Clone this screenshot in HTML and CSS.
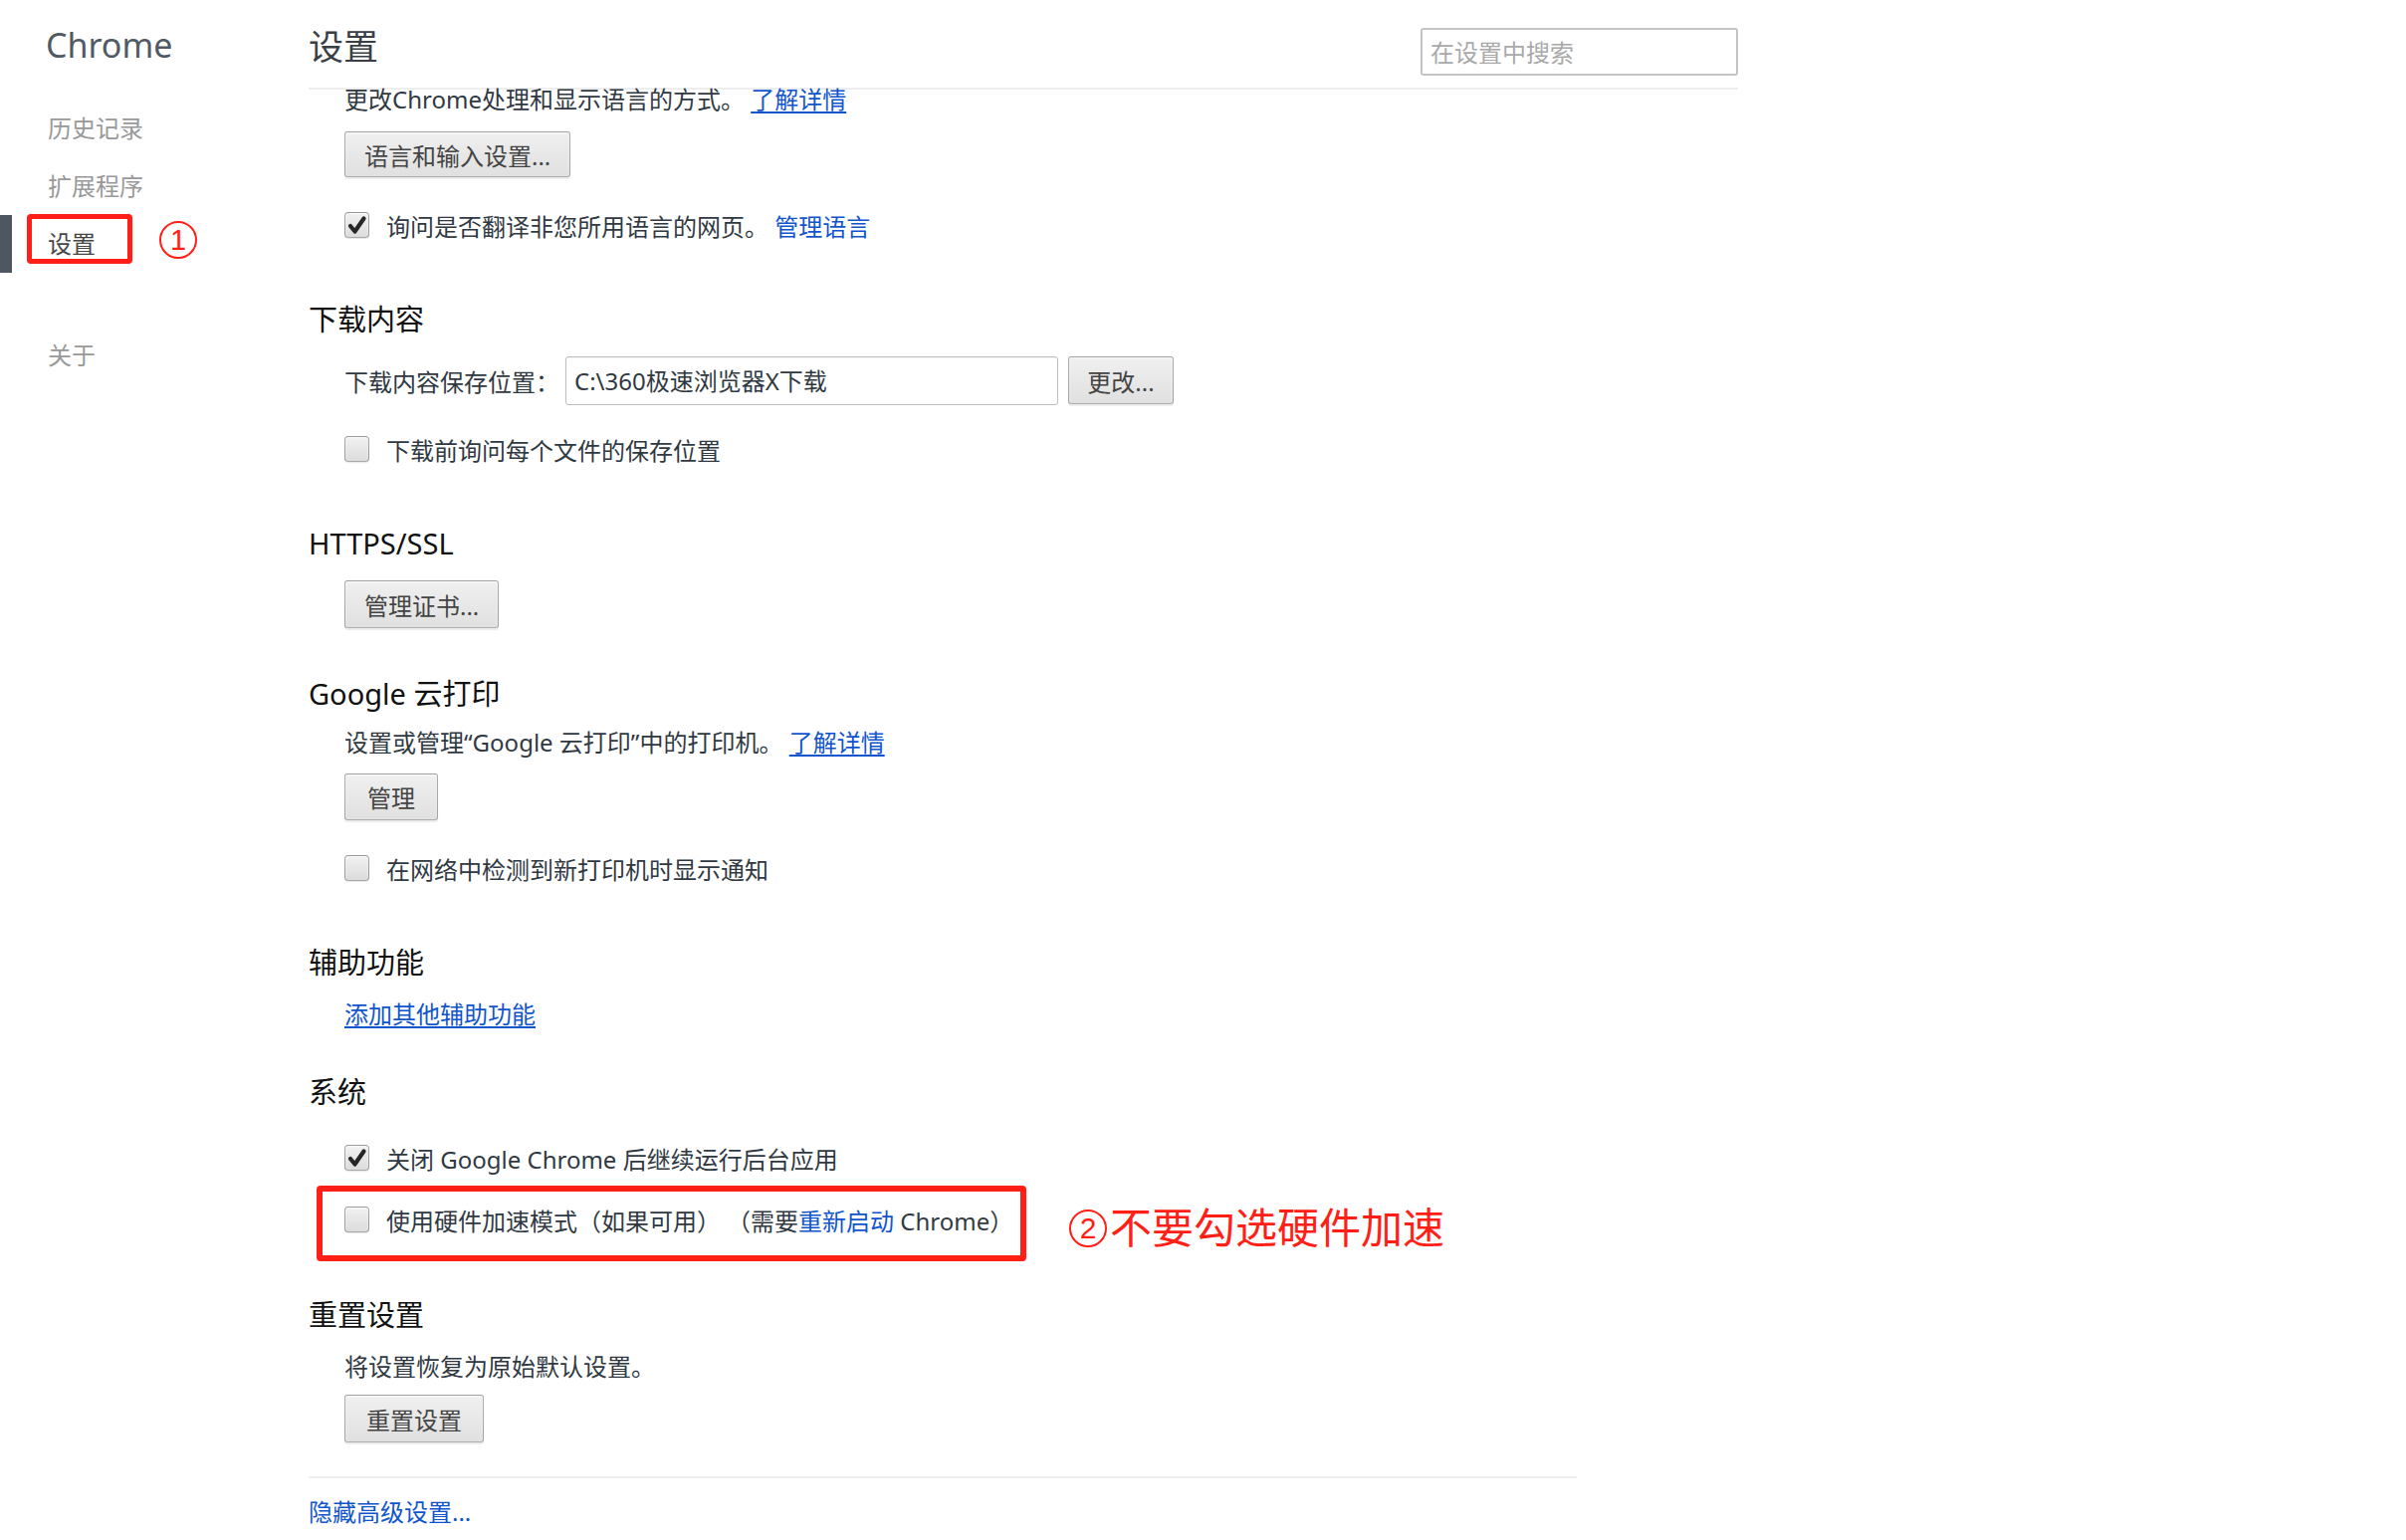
FILE: index.html
```html
<!DOCTYPE html>
<html lang="zh-CN">
<head>
    <meta charset="UTF-8">
    <title>设置</title>
    <link rel="stylesheet" href="styles.css">
</head>
<body>
    <div class="page">
        <!-- Sidebar -->
        <div class="sidebar">
            <div class="brand">Chrome</div>
            <nav class="nav">
                <a href="#" class="nav-item">历史记录</a>
                <a href="#" class="nav-item">扩展程序</a>
                <a href="#" class="nav-item active">设置</a>
                <a href="#" class="nav-item nav-about">关于</a>
            </nav>
            <div class="mark-box mark-nav"></div>
            <span class="mark-num mark-num-nav">1</span>
        </div>

        <!-- Main -->
        <div class="main">
            <div class="main-header">
                <h1 class="page-title">设置</h1>
                <input class="search" type="text" placeholder="在设置中搜索">
            </div>

            <div class="section section-lang">
                <div class="section-body">
                    <div class="desc desc-first">更改Chrome处理和显示语言的方式。 <a href="#" class="link-u">了解详情</a></div>
                    <div class="btn-row btn-after-desc"><button class="btn">语言和输入设置...</button></div>
                    <div class="check-row">
                        <span class="checkbox checked">
                            <svg viewBox="0 0 23 23" width="23" height="23"><path d="M5 12 L9.5 17.5 L18.5 4.5" fill="none" stroke="#262626" stroke-width="4.2" stroke-linecap="round" stroke-linejoin="round"/></svg>
                        </span>
                        <span>询问是否翻译非您所用语言的网页。 <a href="#" class="link">管理语言</a></span>
                    </div>
                </div>
            </div>

            <div class="section">
                <h3 class="section-title">下载内容</h3>
                <div class="section-body">
                    <div class="field-row">
                        <span class="field-label">下载内容保存位置：</span>
                        <div class="field">C:\360极速浏览器X下载</div>
                        <button class="btn btn-change">更改...</button>
                    </div>
                    <div class="check-row check-after-field">
                        <span class="checkbox"></span>
                        <span>下载前询问每个文件的保存位置</span>
                    </div>
                </div>
            </div>

            <div class="section">
                <h3 class="section-title">HTTPS/SSL</h3>
                <div class="section-body">
                    <div class="btn-row btn-tall"><button class="btn">管理证书...</button></div>
                </div>
            </div>

            <div class="section section-after-btn">
                <h3 class="section-title">Google 云打印</h3>
                <div class="section-body">
                    <div class="desc desc-lead">设置或管理“Google 云打印”中的打印机。 <a href="#" class="link-u">了解详情</a></div>
                    <div class="btn-row btn-after-desc-2"><button class="btn btn-wide">管理</button></div>
                    <div class="check-row check-loose">
                        <span class="checkbox"></span>
                        <span>在网络中检测到新打印机时显示通知</span>
                    </div>
                </div>
            </div>

            <div class="section">
                <h3 class="section-title">辅助功能</h3>
                <div class="section-body">
                    <div class="desc"><a href="#" class="link-u">添加其他辅助功能</a></div>
                </div>
            </div>

            <div class="section section-after-link">
                <h3 class="section-title">系统</h3>
                <div class="section-body">
                    <div class="check-row check-first">
                        <span class="checkbox checked">
                            <svg viewBox="0 0 23 23" width="23" height="23"><path d="M5 12 L9.5 17.5 L18.5 4.5" fill="none" stroke="#262626" stroke-width="4.2" stroke-linecap="round" stroke-linejoin="round"/></svg>
                        </span>
                        <span>关闭 Google Chrome 后继续运行后台应用</span>
                    </div>
                    <div class="check-row marked">
                        <span class="checkbox"></span>
                        <span>使用硬件加速模式（如果可用）</span>
                        <span class="restart">（需要<a href="#" class="link">重新启动</a> Chrome）</span>
                        <div class="mark-box mark-gpu"></div>
                        <div class="mark-note"><span class="mark-num mark-num-note">2</span>不要勾选硬件加速</div>
                    </div>
                </div>
            </div>

            <div class="section section-reset">
                <h3 class="section-title">重置设置</h3>
                <div class="section-body">
                    <div class="desc desc-reset">将设置恢复为原始默认设置。</div>
                    <div class="btn-row btn-after-desc-3 btn-tall"><button class="btn btn-mid">重置设置</button></div>
                </div>
            </div>

            <div class="footer-line"></div>
            <div class="desc footer-link"><a href="#" class="link">隐藏高级设置...</a></div>
        </div>
    </div>
</body>
</html>
```

FILE: styles.css
```css
* {
    margin: 0;
    padding: 0;
    box-sizing: border-box;
}

body {
    font-family: "Noto Sans", "Noto Sans CJK SC", sans-serif;
    font-size: 24px;
    color: #303942;
    background-color: #ffffff;
    width: 2417px;
    height: 1547px;
    overflow: hidden;
}

a {
    text-decoration: none;
}

.page {
    display: flex;
    height: 100%;
}

/* Sidebar */

.sidebar {
    width: 310px;
    flex: none;
    position: relative;
    padding-top: 25px;
}

.brand {
    padding-left: 46px;
    font-size: 34px;
    line-height: 40px;
    color: #505a64;
}

.nav {
    margin-top: 35px;
    display: flex;
    flex-direction: column;
}

.nav-item {
    position: relative;
    display: block;
    height: 58px;
    line-height: 58px;
    padding-left: 48px;
    color: #999999;
}

.nav-item.active {
    color: #464646;
}

.nav-item.active::before {
    content: "";
    position: absolute;
    left: 0;
    top: 0;
    width: 12px;
    height: 58px;
    background-color: #4d5661;
}

.nav-about {
    margin-top: 54px;
}

/* Red annotations */

.mark-box {
    position: absolute;
    border: 5px solid #ff1f17;
    border-radius: 4px;
}

.mark-nav {
    left: 27px;
    top: 215px;
    width: 106px;
    height: 50px;
}

.mark-num {
    display: inline-flex;
    align-items: center;
    justify-content: center;
    border: 2.5px solid #ff1f17;
    border-radius: 50%;
    color: #ff1f17;
    font-family: "Liberation Sans", sans-serif;
    line-height: 1;
}

.mark-num-nav {
    position: absolute;
    left: 160px;
    top: 222px;
    width: 38px;
    height: 38px;
    font-size: 29px;
}

.mark-gpu {
    left: -28px;
    top: -19px;
    width: 713px;
    height: 76px;
    border-width: 6px;
}

.mark-note {
    position: absolute;
    left: 728px;
    top: -2px;
    display: flex;
    align-items: center;
    height: 50px;
    font-size: 42px;
    line-height: 50px;
    color: #ff1f17;
    white-space: nowrap;
}

.mark-num-note {
    width: 38px;
    height: 38px;
    font-size: 30px;
    margin-right: 3px;
    margin-top: 2px;
}

/* Main */

.main {
    width: 1436px;
    flex: none;
    position: relative;
}

.main-header {
    display: flex;
    justify-content: space-between;
    align-items: flex-start;
    height: 90px;
    padding-top: 28px;
    border-bottom: 2px solid #eeeeee;
}

.page-title {
    font-size: 35px;
    font-weight: normal;
    line-height: 38px;
    color: #3a3f45;
}

.search {
    width: 319px;
    height: 48px;
    border: 2px solid #c4c4c4;
    border-radius: 3px;
    padding-left: 8px;
    font-family: inherit;
    font-size: 24px;
    color: #303942;
    outline: none;
}

.search::placeholder {
    color: #a9a9a9;
}

.section {
    margin-top: 62px;
}

.section-lang {
    margin-top: 0;
}

.section-after-btn {
    margin-top: 48px;
}

.section-after-link {
    margin-top: 45px;
}

.section-reset {
    margin-top: 63px;
}

.section-title {
    height: 36px;
    font-size: 29px;
    font-weight: normal;
    line-height: 36px;
    color: #111111;
    margin-bottom: 19px;
}

.section-body {
    padding-left: 36px;
}

.desc {
    height: 30px;
    line-height: 30px;
    white-space: nowrap;
}

.desc-first {
    margin-top: -5px;
}

.desc-lead {
    margin-top: -3px;
}

.desc-reset {
    margin-top: 2px;
}

.link {
    color: #1155cc;
}

.link-u {
    color: #1155cc;
    text-decoration: underline;
    text-underline-offset: 3px;
}

/* Buttons */

.btn-row {
    display: flex;
    height: 46px;
}

.btn-tall {
    height: 48px;
}

.btn-after-desc {
    margin-top: 17px;
}

.btn-after-desc-2 {
    margin-top: 16px;
    height: 47px;
}

.btn-after-desc-3 {
    margin-top: 13px;
}

.btn {
    height: 100%;
    padding: 0 19px;
    font-family: inherit;
    font-size: 24px;
    color: #444444;
    background: linear-gradient(#f0f0f0, #e0e0e0);
    border: 1px solid rgba(0, 0, 0, 0.28);
    border-radius: 3px;
    box-shadow: 0 2px 1px rgba(0, 0, 0, 0.08), inset 0 1px 2px rgba(255, 255, 255, 0.75);
    cursor: pointer;
}

.btn-wide {
    padding: 0 22px;
}

.btn-mid {
    padding: 0 21px;
}

/* Checkboxes */

.check-row {
    position: relative;
    display: flex;
    align-items: center;
    height: 30px;
    margin-top: 33px;
    white-space: nowrap;
}

.check-after-field {
    margin-top: 30px;
}

.check-loose {
    margin-top: 33px;
}

.check-first {
    margin-top: 33px;
}

.check-first + .check-row {
    margin-top: 32px;
}

.checkbox {
    flex: none;
    display: inline-flex;
    align-items: center;
    justify-content: center;
    width: 25px;
    height: 26px;
    margin-right: 17px;
    background: linear-gradient(#f1f1f1, #dcdcdc);
    border: 1px solid rgba(0, 0, 0, 0.3);
    border-radius: 4px;
    box-shadow: 0 1px 1px rgba(0, 0, 0, 0.1), inset 0 1px 2px rgba(255, 255, 255, 0.8);
}

.restart {
    margin-left: 6px;
}

/* Download location */

.field-row {
    display: flex;
    align-items: center;
    height: 48px;
}

.field-label {
    width: 222px;
    flex: none;
}

.field {
    width: 495px;
    height: 49px;
    line-height: 47px;
    padding-left: 8px;
    border: 1px solid #bdbdbd;
    border-radius: 3px;
    box-shadow: inset 0 1px 1px rgba(0, 0, 0, 0.05);
}

.btn-change {
    width: 106px;
    height: 48px;
    margin-left: 10px;
    padding: 0;
}

/* Footer */

.footer-line {
    width: 1274px;
    height: 2px;
    margin-top: 34px;
    background-color: #eeeeee;
}

.footer-link {
    margin-top: 19px;
}
```
